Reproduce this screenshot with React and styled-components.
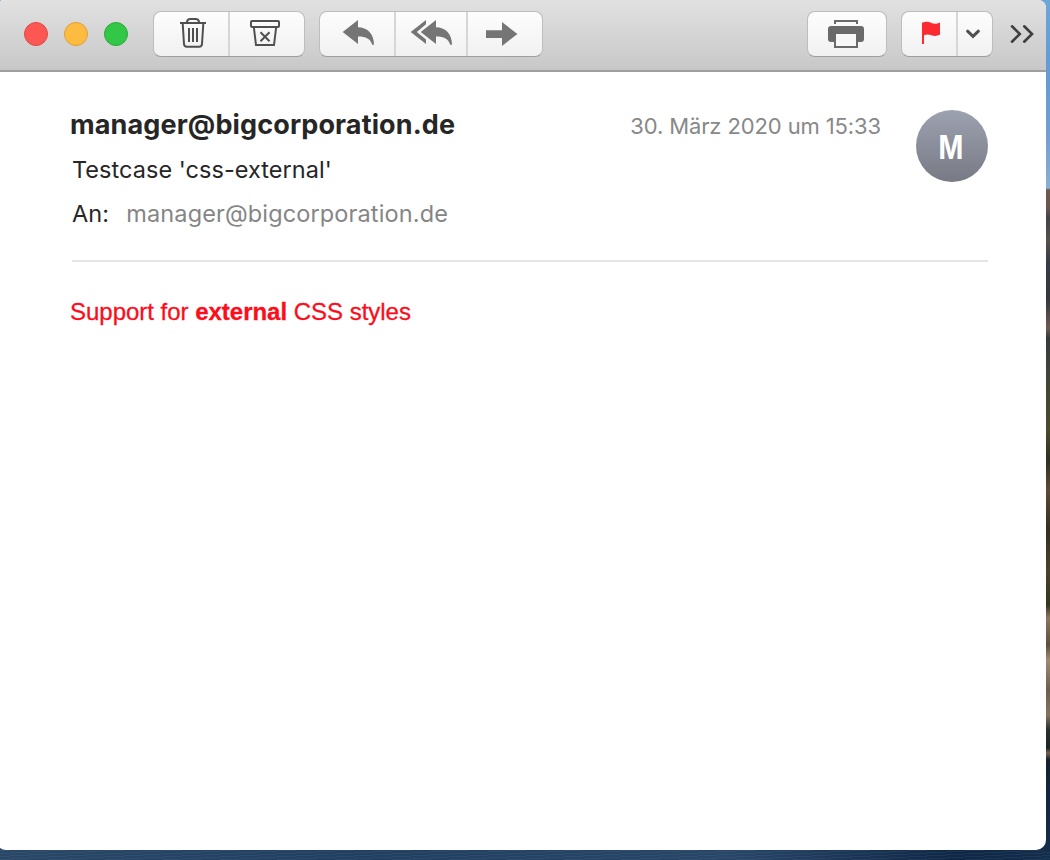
import React from 'react';
import styled, { createGlobalStyle } from 'styled-components';

const GlobalStyle = createGlobalStyle`
  *, *::before, *::after { box-sizing: border-box; }
  body { margin: 0; overflow: hidden; }
`;

const Desktop = styled.div`
  width: 1050px;
  height: 860px;
  overflow: hidden;
  font-family: Inter, 'Liberation Sans', sans-serif;
  background:
    repeating-linear-gradient(177deg, rgba(120, 160, 200, 0.1) 0 1px, transparent 1px 3px) 0 850px / 100% 10px no-repeat,
    linear-gradient(90deg, #2a4766 0%, #213f5f 35%, #294667 70%, #0f2744 92%, #132d4a 100%) 0 840px / 1044px 20px no-repeat,
    linear-gradient(
      180deg,
      #6fa6d8 0, #649bd2 60px, #6e9fd0 130px, #88aed5 188px,
      #70594c 190px, #66564e 208px, #424349 218px, #57504c 240px,
      #363c45 262px, #34383e 300px, #6b5b50 328px, #343c3b 338px,
      #3e4438 370px, #4d4a28 430px, #302f22 460px, #5b4c34 490px,
      #332e21 530px, #4b4128 570px, #33371d 605px, #8c765b 618px,
      #5d5039 645px, #a08a70 660px, #6c604d 690px, #83745c 715px,
      #26302d 730px, #1b2525 748px, #795f50 753px, #14202c 760px,
      #10263f 790px, #142f4d 860px
    );
`;

const Window = styled.main`
  display: flex;
  flex-direction: column;
  width: 1050px;
  height: 850px;
  margin-left: -4px;
  overflow: hidden;
  background: #fff;
  border-radius: 8px 8px 10px 10px;
`;

const Toolbar = styled.header`
  display: flex;
  flex: none;
  height: 72px;
  padding: 11px 0 0 28px;
  border-bottom: 2px solid #a09ea0;
  background: linear-gradient(#e1e1e1, #c8c8c8);
`;

const TrafficLights = styled.div`
  display: flex;
  gap: 16px;
  width: 129px;
  padding-top: 11px;
`;

const Light = styled.span`
  width: 24px;
  height: 24px;
  border: 1px solid ${(p) => p.$edge};
  border-radius: 50%;
  background: ${(p) => p.$color};
`;

const ButtonGroup = styled.div`
  display: flex;
  height: 46px;
  margin-right: ${(p) => p.$after}px;
  border: 1px solid #bdbdbd;
  border-bottom-color: #9e9e9e;
  border-radius: 8px;
  background: linear-gradient(#fdfdfd, #f1f1f1);
`;

const ToolButton = styled.button`
  width: ${(p) => p.$width}px;
  height: 44px;
  padding: 0;
  border: 0;
  background: none;

  & + & {
    border-left: 2px solid #d6d6d6;
  }

  svg { display: block; }
`;

const Overflow = styled.div`
  padding-top: 1px;
  svg { display: block; }
`;

const Message = styled.article`
  padding: 38px 58px 0 76px;
`;

const Header = styled.div`
  display: flex;
  height: 152px;
  border-bottom: 2px solid #e5e5e5;
`;

const Details = styled.div`
  flex: 1;
  white-space: nowrap;
`;

const Sender = styled.h1`
  margin: 0 0 0 -2px;
  font-size: 27px;
  font-weight: 650;
  line-height: 30px;
  letter-spacing: 0.13px;
  color: #262626;
`;

const Subject = styled.div`
  margin-top: 15px;
  font-size: 23.5px;
  line-height: 30px;
  letter-spacing: 0.04px;
  color: #262626;
`;

const Recipient = styled.div`
  display: flex;
  gap: 17px;
  margin-top: 14px;
  font-size: 23.5px;
  line-height: 30px;
  letter-spacing: 0.13px;
  color: #262626;
`;

const Address = styled.span`
  color: #858585;
`;

const Timestamp = styled.time`
  margin-right: 35px;
  font-size: 22px;
  font-weight: 400;
  line-height: 33px;
  letter-spacing: -0.12px;
  color: #888;
  white-space: nowrap;
`;

const Avatar = styled.div`
  display: grid;
  place-items: center;
  width: 72px;
  height: 72px;
  padding: 2px 2px 0 0;
  border-radius: 50%;
  background: linear-gradient(#9da2b1, #777a84);
  color: #fff;
  font-size: 32px;
  font-weight: 700;
`;

const Initial = styled.span`
  transform: scaleX(0.83);
`;

const Body = styled.p`
  margin: 36px 0 0 -2px;
  font-family: 'Liberation Sans', Arial, sans-serif;
  font-size: 24px;
  line-height: 28px;
  letter-spacing: -0.02px;
  color: #fb0d1b;
  -webkit-text-stroke: 0.3px #fb0d1b;
`;

const Icon = ({ x, width, children }) => (
  <svg width={width} height="44" viewBox={`${x} 12 ${width} 44`} fill="none" aria-hidden="true">
    {children}
  </svg>
);

export default function App() {
  return (
    <Desktop>
      <GlobalStyle />
      <Window>
        <Toolbar>
          <TrafficLights>
            <Light $color="#fc5753" $edge="#df4744" />
            <Light $color="#fdbc40" $edge="#de9f34" />
            <Light $color="#33c748" $edge="#27aa35" />
          </TrafficLights>
          <ButtonGroup $after={14}>
            <ToolButton $width={74} aria-label="Löschen">
              <Icon x={154} width={74}>
                <g stroke="#505050" strokeWidth="2">
                  <path d="M180 23h26M187 23v-1.200q.4-2.800 3.200-2.800h5.600q2.800 0 3.200 2.800V23M182.700 23.500l1.300 20.700q.3 2.600 2.800 2.600h12.400q2.500 0 2.800-2.600l1.300-20.700" />
                  <path d="M189 28v14M193 28v14M197 28v14" />
                </g>
              </Icon>
            </ToolButton>
            <ToolButton $width={76} aria-label="Archivieren">
              <Icon x={230} width={74}>
                <g stroke="#505050" strokeWidth="2">
                  <rect x="251" y="21" width="28" height="6" rx="1" />
                  <path d="M253.800 27l2.200 18h18l2.200-18M260.500 32.200l9 9M269.500 32.200l-9 9" />
                </g>
              </Icon>
            </ToolButton>
          </ButtonGroup>
          <ButtonGroup $after={264}>
            <ToolButton $width={74} aria-label="Antworten">
              <Icon x={320} width={74}>
                <path d="M342.700 32L358 20v7.300c9 .2 16 6 16 17.500h-1.800C370.500 39 366 36.500 358 36.500V44z" fill="#757575" />
              </Icon>
            </ToolButton>
            <ToolButton $width={72} aria-label="Allen antworten">
              <Icon x={396} width={70}>
                <path d="M420.700 32L436 20v7.300c9 .2 16 6 16 17.500h-1.800C448.500 39 444 36.500 436 36.500V44zM410.700 32L426 20v4.300L416.800 32l9.200 7.500V44z" fill="#757575" />
              </Icon>
            </ToolButton>
            <ToolButton $width={76} aria-label="Weiterleiten">
              <Icon x={468} width={74}>
                <path d="M486 30.300h16V22l15.400 12L502 46v-8h-16z" fill="#757575" />
              </Icon>
            </ToolButton>
          </ButtonGroup>
          <ButtonGroup $after={14}>
            <ToolButton $width={78} aria-label="Drucken">
              <Icon x={808} width={78}>
                <path d="M835 24v-3h22v3" stroke="#6a6a6a" strokeWidth="2" />
                <path d="M831 26h30q3 0 3 3v10q0 3-3 3h-3v6h-24v-6h-3q-3 0-3-3V29q0-3 3-3z" fill="#6a6a6a" />
                <path d="M836 34h20v12h-20z" fill="#f7f7f7" />
              </Icon>
            </ToolButton>
          </ButtonGroup>
          <ButtonGroup $after={17}>
            <ToolButton $width={54} aria-label="Markieren">
              <Icon x={902} width={54}>
                <path d="M922 22.800c4-1.800 7-.8 9.500.2s5.500 1 8.500-.6v12.400c-3.200 1.400-6 1.400-8.700.4-2.500-.9-4.600-1-7.300 0V44h-2z" fill="#fc2b31" />
              </Icon>
            </ToolButton>
            <ToolButton $width={36} aria-label="Markierung wählen">
              <Icon x={958} width={34}>
                <path d="M967.600 31.200l5.400 5.200 5.400-5.200" stroke="#505050" strokeWidth="3" strokeLinecap="round" />
              </Icon>
            </ToolButton>
          </ButtonGroup>
          <Overflow>
            <Icon x={1010} width={26}>
              <path d="M1012 26.300l7.800 7.700-7.800 7.700M1024.200 26.300L1032 34l-7.800 7.700" stroke="#3f3f3f" strokeWidth="2.600" strokeLinecap="round" />
            </Icon>
          </Overflow>
        </Toolbar>
        <Message>
          <Header>
            <Details>
              <Sender>manager@bigcorporation.de</Sender>
              <Subject>Testcase 'css-external'</Subject>
              <Recipient>
                <span>An:</span>
                <Address>manager@bigcorporation.de</Address>
              </Recipient>
            </Details>
            <Timestamp>30. März 2020 um 15:33</Timestamp>
            <Avatar>
              <Initial>M</Initial>
            </Avatar>
          </Header>
          <Body>
            Support for <b>external</b> CSS styles
          </Body>
        </Message>
      </Window>
    </Desktop>
  );
}
